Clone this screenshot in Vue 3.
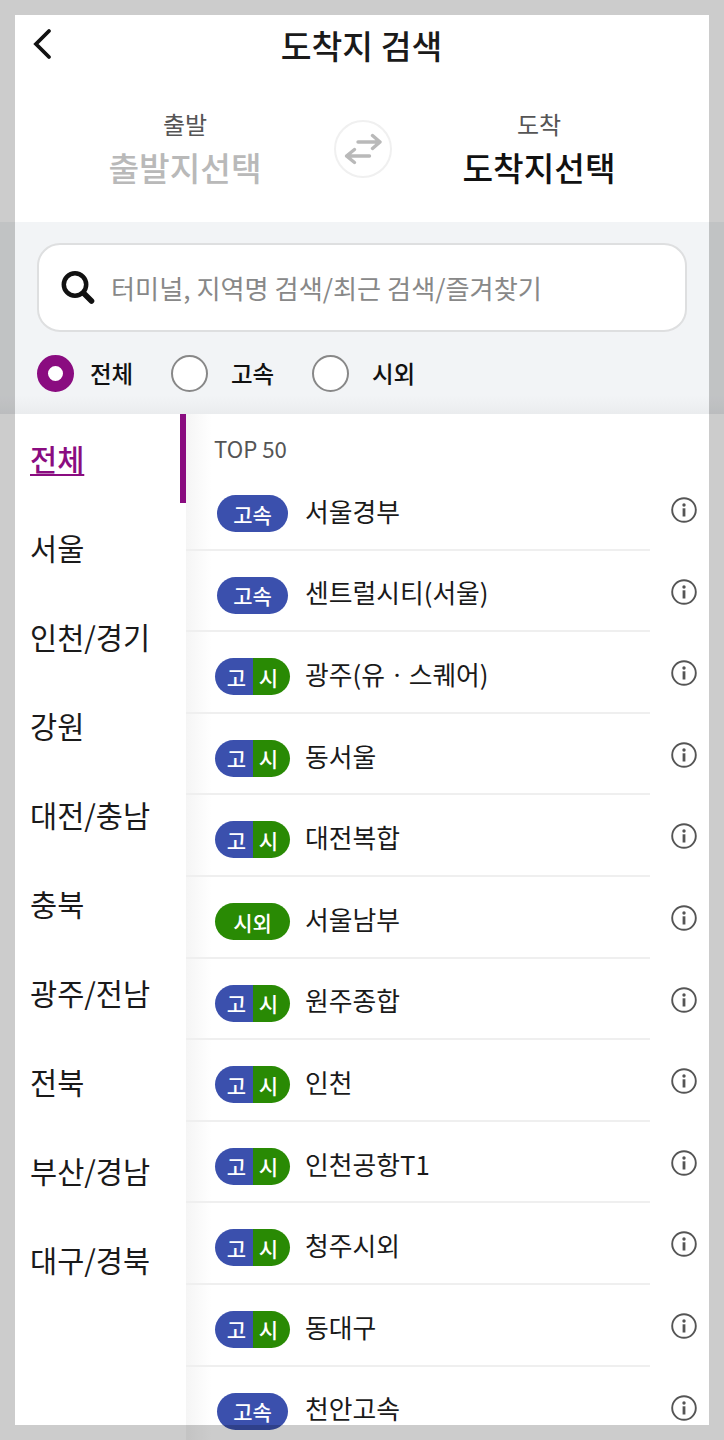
<script setup>
import { ref } from 'vue'

const filters = ['전체', '고속', '시외']
const activeFilter = ref('전체')

const regions = [
  '전체',
  '서울',
  '인천/경기',
  '강원',
  '대전/충남',
  '충북',
  '광주/전남',
  '전북',
  '부산/경남',
  '대구/경북'
]
const activeRegion = ref('전체')

const terminals = [
  { name: '서울경부', type: 'express' },
  { name: '센트럴시티(서울)', type: 'express' },
  { name: '광주(유ㆍ스퀘어)', type: 'both' },
  { name: '동서울', type: 'both' },
  { name: '대전복합', type: 'both' },
  { name: '서울남부', type: 'intercity' },
  { name: '원주종합', type: 'both' },
  { name: '인천', type: 'both' },
  { name: '인천공항T1', type: 'both' },
  { name: '청주시외', type: 'both' },
  { name: '동대구', type: 'both' },
  { name: '천안고속', type: 'express' }
]
</script>

<template>
  <div class="screen">
    <header class="header">
      <div class="title-bar">
        <button class="back" type="button" aria-label="뒤로">
          <svg width="20" height="32" viewBox="0 0 20 32">
            <path d="M17 3L4 16L17 29" fill="none" stroke="#111" stroke-width="3.800" stroke-linecap="round" />
          </svg>
        </button>
        <h1>도착지 검색</h1>
      </div>

      <div class="route">
        <div class="stop departure">
          <span class="stop-label">출발</span>
          <strong>출발지선택</strong>
        </div>
        <button class="swap" type="button" aria-label="출발지 도착지 변경">
          <svg width="38" height="32" viewBox="0 0 38 32" fill="none" stroke="#b9b9b9" stroke-width="3.400" stroke-linecap="round" stroke-linejoin="round">
            <path d="M14 9H36M28.500 2.500L36 9L28.500 15.500" />
            <path d="M25.500 23H2.500M10.500 16.500L2.500 23L10.500 29.500" />
          </svg>
        </button>
        <div class="stop arrival">
          <span class="stop-label">도착</span>
          <strong>도착지선택</strong>
        </div>
      </div>
    </header>

    <section class="search-panel">
      <div class="search-box">
        <svg width="36" height="36" viewBox="0 0 36 36" fill="none" stroke="#111">
          <circle cx="15" cy="14.500" r="11.200" stroke-width="4.500" />
          <path d="M24 23.500L31.500 31" stroke-width="5.600" stroke-linecap="round" />
        </svg>
        <span>터미널, 지역명 검색/최근 검색/즐겨찾기</span>
      </div>
      <div class="filters">
        <label
          v-for="filter in filters"
          :key="filter"
          class="filter"
          @click="activeFilter = filter"
        >
          <span class="radio" :class="{ checked: activeFilter === filter }"></span>
          {{ filter }}
        </label>
      </div>
    </section>

    <main class="content">
      <ul class="region-list">
        <li
          v-for="region in regions"
          :key="region"
          :class="{ active: activeRegion === region }"
          @click="activeRegion = region"
        >
          <span>{{ region }}</span>
        </li>
      </ul>

      <div class="terminal-panel">
        <p class="list-title">TOP 50</p>
        <ul class="terminal-list">
          <li v-for="terminal in terminals" :key="terminal.name">
            <div class="terminal">
              <div class="badge-cell">
                <span v-if="terminal.type === 'express'" class="badge express">고속</span>
                <span v-else-if="terminal.type === 'intercity'" class="badge intercity">시외</span>
                <span v-else class="badge both">
                  <span>고</span>
                  <span>시</span>
                </span>
              </div>
              <span class="name">{{ terminal.name }}</span>
            </div>
            <svg class="info" width="28" height="28" viewBox="0 0 28 28">
              <circle cx="14" cy="14" r="11.800" fill="none" stroke="#555" stroke-width="1.900" />
              <circle cx="14" cy="9" r="1.700" fill="#555" />
              <path d="M14 12.300V20.500" stroke="#555" stroke-width="2.800" />
            </svg>
          </li>
        </ul>
      </div>
    </main>

    <div class="frame"></div>
  </div>
</template>

<style>
body {
  margin: 0;
  overflow: hidden;
}
</style>

<style scoped>
.screen {
  position: relative;
  box-sizing: border-box;
  width: 724px;
  height: 1440px;
  overflow: hidden;
  display: flex;
  flex-direction: column;
  background: #fff;
  color: #1a1a1a;
  font-family: 'Noto Sans CJK KR', sans-serif;
}

.screen * {
  box-sizing: border-box;
}

/* translucent edge over the whole screen */
.frame {
  position: absolute;
  inset: 0;
  border: 15px solid rgba(0, 0, 0, 0.2);
  pointer-events: none;
}

button {
  padding: 0;
  border: 0;
  background: none;
}

ul {
  list-style: none;
  margin: 0;
  padding: 0;
}

.header {
  flex: none;
  height: 222px;
  padding-top: 15px;
}

.title-bar {
  display: grid;
  grid-template-columns: 50px 1fr 50px;
  align-items: center;
  height: 62px;
  padding: 0 16px 0 15px;
}

.back {
  display: flex;
  padding: 0 0 4px 17px;
}

h1 {
  margin: 0;
  font-size: 33.5px;
  font-weight: 500;
  line-height: 60px;
  padding-bottom: 2px;
  text-align: center;
}

.route {
  display: grid;
  grid-template-columns: 334px 58px 1fr;
  padding-top: 30px;
}

.stop {
  display: flex;
  flex-direction: column;
  align-items: center;
}

.departure {
  padding-left: 36px;
}

.arrival {
  padding-right: 38px;
}

.stop-label {
  font-size: 24px;
  line-height: 34px;
  color: #555;
}

.stop strong {
  font-size: 33.3px;
  font-weight: 500;
  line-height: 52px;
  color: #111;
}

.departure strong {
  color: #b9b9b9;
}

.swap {
  display: flex;
  align-items: center;
  justify-content: center;
  width: 58px;
  height: 58px;
  margin-top: 13px;
  border: 2px solid #f0f0f0;
  border-radius: 50%;
}

.search-panel {
  flex: none;
  height: 192px;
  padding: 21px 37px 0;
  background: linear-gradient(#f2f4f6 0, #f2f4f6 174px, #eaecee 192px);
}

.search-box {
  display: flex;
  align-items: center;
  gap: 15px;
  height: 89px;
  padding: 0 21px;
  border: 2px solid #dedfe0;
  border-radius: 23px;
  background: #fff;
  color: #888;
  font-size: 26.2px;
}

.search-box span {
  padding-top: 1px;
}

.filters {
  display: flex;
  padding-top: 21px;
}

.filter {
  display: flex;
  align-items: center;
  gap: 16px;
  width: 134px;
  font-size: 23.5px;
  font-weight: 500;
  line-height: 40px;
  color: #111;
}

.filter + .filter {
  gap: 23px;
  width: 141px;
}

.radio {
  width: 37px;
  height: 37px;
  border: 2px solid #888;
  border-radius: 50%;
  background: #fff;
}

.radio.checked {
  border: 11px solid #8a0c80;
}

.content {
  flex: 1;
  min-height: 0;
  display: flex;
}

.region-list {
  width: 186px;
  flex: none;
}

.region-list li {
  height: 89px;
  padding-left: 30px;
  border-right: 6px solid transparent;
  font-size: 29.5px;
  line-height: 89px;
}

.region-list li.active {
  border-right-color: #8a0c80;
  color: #8a0c80;
  font-weight: 500;
}

.region-list li.active span {
  text-decoration: underline;
  text-decoration-thickness: 2px;
  text-decoration-skip-ink: none;
  text-underline-offset: 3px;
}

.terminal-panel {
  flex: 1;
  background: linear-gradient(90deg, #f5f5f5, #fff 26px);
}

.list-title {
  height: 55px;
  margin: 0;
  padding-left: 28px;
  font-size: 22.2px;
  line-height: 68px;
  color: #555;
}

.terminal-list li {
  display: flex;
  height: 81.6px;
}

.terminal {
  display: flex;
  align-items: center;
  width: 464px;
  border-bottom: 2px solid #efefef;
  font-size: 25.8px;
}

.name {
  padding-top: 3px;
}

.badge-cell {
  display: flex;
  justify-content: center;
  width: 75px;
  margin: 9.500px 15px 0 29px;
}

.badge {
  display: flex;
  align-items: center;
  justify-content: center;
  width: 75px;
  height: 37px;
  border-radius: 19px;
  overflow: hidden;
  color: #fff;
  font-size: 21px;
  font-weight: 500;
  line-height: 36px;
}

.badge.express {
  width: 71px;
  background: #3b50ad;
}

.badge.intercity {
  background: #298a04;
}

.badge.both {
  background: linear-gradient(90deg, #3b50ad 50%, #298a04 50%);
}

.badge.both span {
  width: 32px;
  text-align: center;
}

.info {
  margin: 27px 0 0 20px;
}
</style>
